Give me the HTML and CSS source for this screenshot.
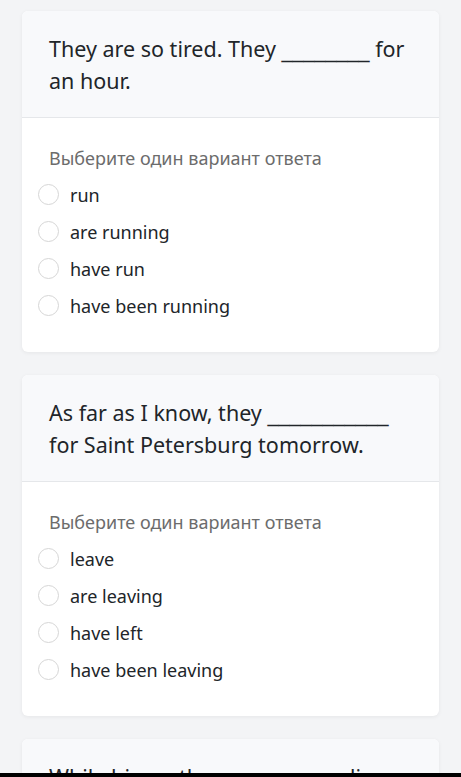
FILE: index.html
```html
<!DOCTYPE html>
<html lang="ru">
<head>
    <meta charset="UTF-8">
    <meta name="viewport" content="width=device-width, initial-scale=1.0">
    <title>Тест</title>
    <link rel="stylesheet" href="styles.css">
</head>
<body>
    <div class="quiz">
        <div class="card">
            <div class="card-header">They are so tired. They <span class="blank">________</span> for an hour.</div>
            <div class="card-body">
                <p class="hint">Выберите один вариант ответа</p>
                <label class="option"><input type="radio" name="q1"><span>run</span></label>
                <label class="option"><input type="radio" name="q1"><span>are running</span></label>
                <label class="option"><input type="radio" name="q1"><span>have run</span></label>
                <label class="option"><input type="radio" name="q1"><span>have been running</span></label>
            </div>
        </div>

        <div class="card">
            <div class="card-header">As far as I know, they <span class="blank">___________</span> for Saint Petersburg tomorrow.</div>
            <div class="card-body">
                <p class="hint">Выберите один вариант ответа</p>
                <label class="option"><input type="radio" name="q2"><span>leave</span></label>
                <label class="option"><input type="radio" name="q2"><span>are leaving</span></label>
                <label class="option"><input type="radio" name="q2"><span>have left</span></label>
                <label class="option"><input type="radio" name="q2"><span>have been leaving</span></label>
            </div>
        </div>

        <div class="card">
            <div class="card-header">While his mother <span class="blank">__________</span> dinner, he was doing his homework.</div>
            <div class="card-body">
                <p class="hint">Выберите один вариант ответа</p>
                <label class="option"><input type="radio" name="q3"><span>cooked</span></label>
                <label class="option"><input type="radio" name="q3"><span>was cooking</span></label>
                <label class="option"><input type="radio" name="q3"><span>has cooked</span></label>
                <label class="option"><input type="radio" name="q3"><span>had cooked</span></label>
            </div>
        </div>
    </div>
    <div class="bottom-bar"></div>
</body>
</html>
```

FILE: styles.css
```css
body {
    font-family: 'Noto Sans', 'Open Sans', sans-serif;
    margin: 0;
    background-color: #f3f4f6;
    color: #212529;
}

.quiz {
    padding: 11px 22px;
}

.card {
    background-color: white;
    border-radius: 6px;
    margin-bottom: 23px;
    box-shadow: 0 1px 4px rgba(0, 0, 0, 0.06);
    overflow: hidden;
}

.card-header {
    background-color: #f8f9fb;
    border-bottom: 1px solid #e5e7ea;
    padding: 22px 27px 20px;
    font-size: 21.5px;
    line-height: 32px;
}

/* wider underscores than Noto Sans has */
.blank {
    font-family: 'DejaVu Sans', sans-serif;
    font-size: 22px;
    line-height: 1;
}

.card-body {
    padding: 28px 27px 28px 16px;
}

.hint {
    margin: 0 0 6px 11px;
    font-size: 18px;
    line-height: 24px;
    color: #6c6c6c;
}

.option {
    display: flex;
    align-items: center;
    height: 37px;
    font-size: 18px;
    cursor: pointer;
}

.option input {
    appearance: none;
    width: 21px;
    height: 21px;
    margin: 0 11px 0 0;
    border: 1px solid #d6d6d6;
    border-radius: 50%;
    background-color: white;
}

.option input:checked {
    border: 6px solid #0d6efd;
}

.bottom-bar {
    position: fixed;
    left: 0;
    right: 0;
    bottom: 0;
    height: 4px;
    background-color: #000;
}
```
